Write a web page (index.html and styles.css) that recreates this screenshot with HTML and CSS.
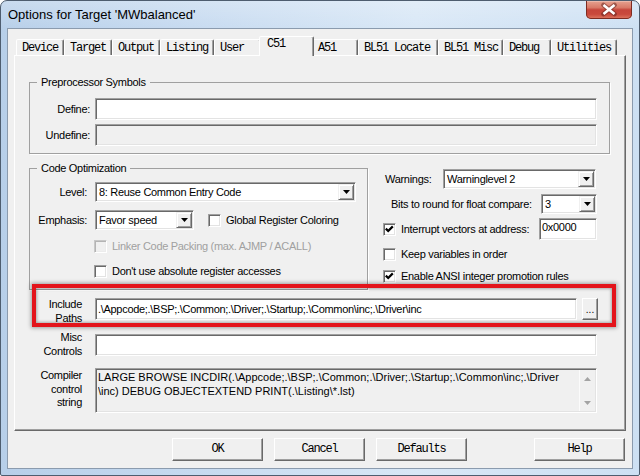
FILE: index.html
```html
<!DOCTYPE html>
<html>
<head>
<meta charset="utf-8">
<link rel="stylesheet" href="styles.css">
</head>
<body>
<div class="window">
  <div class="titlebar">
    <span class="title">Options for Target 'MWbalanced'</span>
    <div class="close">
      <svg width="46" height="19" viewBox="0 0 46 19">
        <path d="M17.5 5 L28.5 14 M28.5 5 L17.5 14" stroke="#5b2019" stroke-width="4.8" stroke-linecap="round" opacity=".5" fill="none"/>
        <path d="M17.5 5 L28.5 14 M28.5 5 L17.5 14" stroke="#fff" stroke-width="2.6" fill="none"/>
      </svg>
    </div>
  </div>
  <div class="client">
    <div class="tabs">
      <div class="tab">Device</div>
      <div class="tab">Target</div>
      <div class="tab">Output</div>
      <div class="tab">Listing</div>
      <div class="tab">User</div>
      <div class="tab sel">C51</div>
      <div class="tab">A51</div>
      <div class="tab">BL51 Locate</div>
      <div class="tab">BL51 Misc</div>
      <div class="tab">Debug</div>
      <div class="tab">Utilities</div>
    </div>
    <div class="panel">
      <fieldset class="group pre">
        <legend>Preprocessor Symbols</legend>
        <div class="row">
          <span class="lbl lbl-pre">Define:</span>
          <div class="field edit w-full"></div>
        </div>
        <div class="row mt4">
          <span class="lbl lbl-pre">Undefine:</span>
          <div class="field edit w-full disabled"></div>
        </div>
      </fieldset>

      <div class="mid">
        <fieldset class="group opt">
          <legend>Code Optimization</legend>
          <div class="row">
            <span class="lbl lbl-opt">Level:</span>
            <div class="field combo w-level">
              <span class="val">8: Reuse Common Entry Code</span>
              <span class="arrow"><svg width="7" height="4" viewBox="0 0 7 4"><path d="M0 0 H7 L3.5 4 Z" fill="#000"/></svg></span>
            </div>
          </div>
          <div class="row mt8">
            <span class="lbl lbl-opt">Emphasis:</span>
            <div class="field combo w-emph">
              <span class="val">Favor speed</span>
              <span class="arrow"><svg width="7" height="4" viewBox="0 0 7 4"><path d="M0 0 H7 L3.5 4 Z" fill="#000"/></svg></span>
            </div>
            <span class="cb ml14"></span>
            <span class="cbt">Global Register Coloring</span>
          </div>
          <div class="row ckrow mt8">
            <span class="cb cb-dis"></span>
            <span class="cbt grey">Linker Code Packing (max. AJMP / ACALL)</span>
          </div>
          <div class="row ckrow mt8">
            <span class="cb"></span>
            <span class="cbt">Don't use absolute register accesses</span>
          </div>
        </fieldset>

        <div class="rcol">
          <div class="row">
            <span class="warn-lbl">Warnings:</span>
            <div class="field combo w-warn">
              <span class="val">Warninglevel 2</span>
              <span class="arrow"><svg width="7" height="4" viewBox="0 0 7 4"><path d="M0 0 H7 L3.5 4 Z" fill="#000"/></svg></span>
            </div>
          </div>
          <div class="row mt5">
            <span class="bits-lbl">Bits to round for float compare:</span>
            <div class="field combo w-bits">
              <span class="val">3</span>
              <span class="arrow"><svg width="7" height="4" viewBox="0 0 7 4"><path d="M0 0 H7 L3.5 4 Z" fill="#000"/></svg></span>
            </div>
          </div>
          <div class="row mt4 irow">
            <span class="cb"><svg width="11" height="11" viewBox="0 0 11 11"><path d="M1.8 4.6 L4.2 7 L8.8 2.4" stroke="#000" stroke-width="2.2" fill="none"/></svg></span>
            <span class="cbt grow">Interrupt vectors at address:</span>
            <div class="field edit w-addr"><span class="addr">0x0000</span></div>
          </div>
          <div class="row ckrow2 mt8">
            <span class="cb"></span>
            <span class="cbt">Keep variables in order</span>
          </div>
          <div class="row ckrow2 mt9">
            <span class="cb"><svg width="11" height="11" viewBox="0 0 11 11"><path d="M1.8 4.6 L4.2 7 L8.8 2.4" stroke="#000" stroke-width="2.2" fill="none"/></svg></span>
            <span class="cbt">Enable ANSI integer promotion rules</span>
          </div>
        </div>
      </div>

      <div class="prow include">
        <span class="plbl">Include<br>Paths</span>
        <div class="field edit w-inc"><span class="txt">.\Appcode;.\BSP;.\Common;.\Driver;.\Startup;.\Common\inc;.\Driver\inc</span></div>
        <div class="dots">...</div>
      </div>
      <div class="prow misc">
        <span class="plbl">Misc<br>Controls</span>
        <div class="field edit w-full"></div>
      </div>
      <div class="prow comp">
        <span class="plbl">Compiler<br>control<br>string</span>
        <div class="field memo w-full">
          <div class="memo-text">LARGE BROWSE INCDIR(.\Appcode;.\BSP;.\Common;.\Driver;.\Startup;.\Common\inc;.\Driver<br>\inc) DEBUG OBJECTEXTEND PRINT(.\Listing\*.lst)</div>
          <div class="vscroll">
            <span class="sarrow"><svg width="7" height="4" viewBox="0 0 7 4"><path d="M0 4 H7 L3.5 0 Z" fill="#a3a3a3"/></svg></span>
            <span class="sarrow"><svg width="7" height="4" viewBox="0 0 7 4"><path d="M0 0 H7 L3.5 4 Z" fill="#a3a3a3"/></svg></span>
          </div>
        </div>
      </div>

      <div class="highlight"></div>
    </div>

    <div class="buttons">
      <div class="btn">OK</div>
      <div class="btn">Cancel</div>
      <div class="btn">Defaults</div>
      <div class="btn help">Help</div>
    </div>
  </div>
</div>
</body>
</html>
```

FILE: styles.css
```css
* { box-sizing: border-box; }
html, body { margin: 0; padding: 0; }
body {
  width: 640px;
  height: 476px;
  overflow: hidden;
  background: #ffffff;
  font-family: "Liberation Sans", Arial, sans-serif;
  font-size: 11px;
  letter-spacing: -0.3px;
  color: #000;
}

.window {
  width: 640px;
  height: 476px;
  border: 1px solid #4e5d6f;
  border-radius: 7px 7px 2px 2px;
  background:
    linear-gradient(to bottom, rgba(255,255,255,0.25), rgba(255,255,255,0) 30px),
    linear-gradient(to right, #b7cfe9 0%, #c6daf0 30%, #d8e7f6 65%, #cde0f3 100%);
  display: flex;
  flex-direction: column;
  overflow: hidden;
}

.titlebar {
  height: 27px;
  display: flex;
  align-items: flex-start;
  padding-left: 7px;
  flex: none;
}
.title {
  font-size: 13px;
  letter-spacing: 0;
  line-height: 27px;
  color: #000;
}
.close {
  margin-left: auto;
  margin-right: 7px;
  margin-top: -1px;
  width: 46px;
  height: 19px;
  border-radius: 0 0 5px 5px;
  background: linear-gradient(to bottom, #e9a896 0%, #d97a68 40%, #c6453a 52%, #c9493c 75%, #e07a63 100%);
  box-shadow: inset 0 0 0 1px #7d2c22, inset 0 2px 0 0 rgba(255,255,255,0.25);
}
.close svg { display: block; }

.client {
  flex: 1;
  margin: 0 6px 6px 6px;
  border: 1px solid #8b9bae;
  background: #f0f0f0;
  display: flex;
  flex-direction: column;
}

/* tabs */
.tabs {
  display: flex;
  align-items: flex-end;
  height: 20px;
  margin-top: 6px;
  padding-left: 8px;
  flex: none;
}
.tab {
  height: 16px;
  padding: 1px 0 0 5px;
  font-family: "Liberation Mono", "Courier New", monospace;
  font-size: 12px;
  letter-spacing: -1.2px;
  line-height: 15px;
  white-space: nowrap;
  border: 1px solid;
  border-bottom: none;
  border-color: #ffffff #696969 transparent #ffffff;
  border-radius: 2px 2px 0 0;
  box-shadow: inset -1px 0 0 #a0a0a0;
  background: #f0f0f0;
}
.tab:nth-child(1) { width: 48px; }
.tab:nth-child(2) { width: 48px; }
.tab:nth-child(3) { width: 48px; }
.tab:nth-child(4) { width: 54px; }
.tab:nth-child(5) { width: 47px; }
.tab:nth-child(7) { width: 46px; }
.tab:nth-child(8) { width: 80px; }
.tab:nth-child(9) { width: 65px; }
.tab:nth-child(10) { width: 48px; }
.tab:nth-child(11) { width: 66px; }
.tab.sel {
  width: 55px;
  height: 20px;
  margin: 0 -2px -1px -2px;
  padding: 0 0 0 7px;
  position: relative;
  z-index: 2;
}

/* panel */
.panel {
  position: relative;
  margin-left: 6px;
  width: 612px;
  height: 376px;
  flex: none;
  border: 1px solid;
  border-color: #ffffff #696969 #696969 #ffffff;
  box-shadow: inset -1px -1px 0 #a0a0a0;
}

.group {
  margin: 0;
  padding: 0;
  min-width: 0;
  border: 1px solid #a0a0a0;
  box-shadow: 1px 1px 0 #ffffff;
}
.group legend {
  margin-left: 7px;
  padding: 0 4px;
  line-height: 13px;
  font-size: 11px;
}

.pre {
  margin: 20px 0 0 14px;
  width: 581px;
  padding: 9px 12px 7px 0;
}

.row { display: flex; align-items: center; }
.mt4 { margin-top: 4px; }
.mt5 { margin-top: 5px; }
.mt8 { margin-top: 8px; }
.mt9 { margin-top: 9px; }
.ml14 { margin-left: 14px; }

.lbl { text-align: right; line-height: 13px; flex: none; }
.lbl-pre { width: 60px; margin-right: 5px; }
.lbl-opt { width: 57px; margin-right: 8px; }

/* fields */
.field {
  flex: none;
  border: 1px solid;
  border-color: #a0a0a0 #ffffff #ffffff #a0a0a0;
  box-shadow: inset 1px 1px 0 #696969, inset -1px -1px 0 #e3e3e3;
  background: #ffffff;
}
.field.disabled { background: #f0f0f0; }
.edit { height: 22px; }
.w-full { width: 502px; }

.combo {
  height: 20px;
  padding: 1px;
  display: flex;
  align-items: stretch;
}
.combo .val {
  flex: 1;
  padding-left: 2px;
  line-height: 16px;
  white-space: nowrap;
  overflow: hidden;
}
.arrow {
  width: 16px;
  flex: none;
  background: #f0f0f0;
  border: 1px solid;
  border-color: #f0f0f0 #696969 #696969 #f0f0f0;
  box-shadow: inset 1px 1px 0 #ffffff, inset -1px -1px 0 #a0a0a0;
  display: flex;
  align-items: center;
  justify-content: center;
}
.arrow svg { display: block; }
.w-level { width: 261px; }
.w-emph { width: 99px; }
.w-warn { width: 153px; }
.w-bits { width: 56px; }

/* checkboxes */
.cb {
  width: 13px;
  height: 13px;
  flex: none;
  border: 1px solid;
  border-color: #a0a0a0 #ffffff #ffffff #a0a0a0;
  box-shadow: inset 1px 1px 0 #696969, inset -1px -1px 0 #e3e3e3;
  background: #ffffff;
}
.cb svg { display: block; }
.cb.cb-dis {
  background: #f0f0f0;
  border-color: #c8c8c8 #ffffff #ffffff #c8c8c8;
  box-shadow: inset 1px 1px 0 #b4b4b4, inset -1px -1px 0 #ececec;
}
.cbt { margin-left: 5px; line-height: 13px; white-space: nowrap; }
.cbt.grey { color: #a0a0a0; }
.cbt.grow { flex: 1; }

.ckrow { height: 17px; padding-left: 64px; }
.ckrow2 { height: 13px; }

/* middle section */
.mid {
  display: flex;
  align-items: flex-start;
  margin-top: 8px;
}
.opt {
  margin: 0 0 0 14px;
  width: 339px;
  padding: 7px 0 9px 0;
}
.rcol {
  margin: 7px 0 0 15px;
  width: 214px;
  display: flex;
  flex-direction: column;
}
.warn-lbl { width: 58px; margin-left: 2px; line-height: 13px; }
.bits-lbl { flex: 1; margin-left: 8px; line-height: 13px; white-space: nowrap; }
.irow { height: 22px; }
.w-addr { width: 58px; }
.addr { display: block; padding-left: 2px; line-height: 14px; padding-top: 1px; }

/* path rows */
.prow { display: flex; align-items: flex-start; }
.plbl {
  width: 53px;
  margin-left: 14px;
  margin-right: 13px;
  text-align: right;
  line-height: 13.5px;
  flex: none;
}
.include { margin-top: 8px; }
.misc { margin-top: 9px; }
.misc .plbl { margin-top: -3px; }
.comp { margin-top: 10px; }
.comp .plbl { margin-top: 1px; }

.w-inc { width: 482px; }
.txt {
  display: block;
  padding-left: 2px;
  line-height: 20px;
  white-space: nowrap;
  overflow: hidden;
}
.dots {
  margin-left: 5px;
  width: 16px;
  height: 22px;
  flex: none;
  border: 1px solid;
  border-color: #ffffff #696969 #696969 #ffffff;
  box-shadow: inset -1px -1px 0 #a0a0a0;
  background: #f0f0f0;
  text-align: center;
  line-height: 22px;
  font-size: 10px;
  letter-spacing: 0;
}

.memo {
  height: 45px;
  background: #f0f0f0;
  padding: 1px 1px 1px 2px;
  display: flex;
}
.memo-text {
  flex: 1;
  line-height: 14px;
  white-space: nowrap;
  overflow: hidden;
  letter-spacing: 0;
}
.vscroll {
  width: 16px;
  flex: none;
  display: flex;
  flex-direction: column;
  justify-content: space-between;
  background: #f0f0f0;
  box-shadow: inset 1px 0 0 #fbfbfb;
}
.sarrow {
  height: 17px;
  display: flex;
  align-items: center;
  justify-content: center;
}
.sarrow svg { display: block; }

/* red annotation overlay */
.highlight {
  position: absolute;
  left: 17px;
  top: 228px;
  width: 584px;
  height: 43px;
  border: 4px solid #e3141b;
  box-shadow: 0 0 4px 1px rgba(0,0,0,0.35), inset 0 0 3px 1px rgba(0,0,0,0.3);
  pointer-events: none;
}

/* buttons */
.buttons {
  display: flex;
  justify-content: flex-end;
  gap: 11px;
  margin-top: 7px;
  padding-right: 7px;
  flex: none;
}
.btn {
  width: 91px;
  height: 23px;
  border: 1px solid;
  border-color: #ffffff #696969 #696969 #ffffff;
  box-shadow: inset -1px -1px 0 #a0a0a0;
  background: #f0f0f0;
  text-align: center;
  font-family: "Liberation Mono", "Courier New", monospace;
  font-size: 12px;
  letter-spacing: -1.2px;
  line-height: 21px;
}
.btn.help { margin-left: 56px; }
```
